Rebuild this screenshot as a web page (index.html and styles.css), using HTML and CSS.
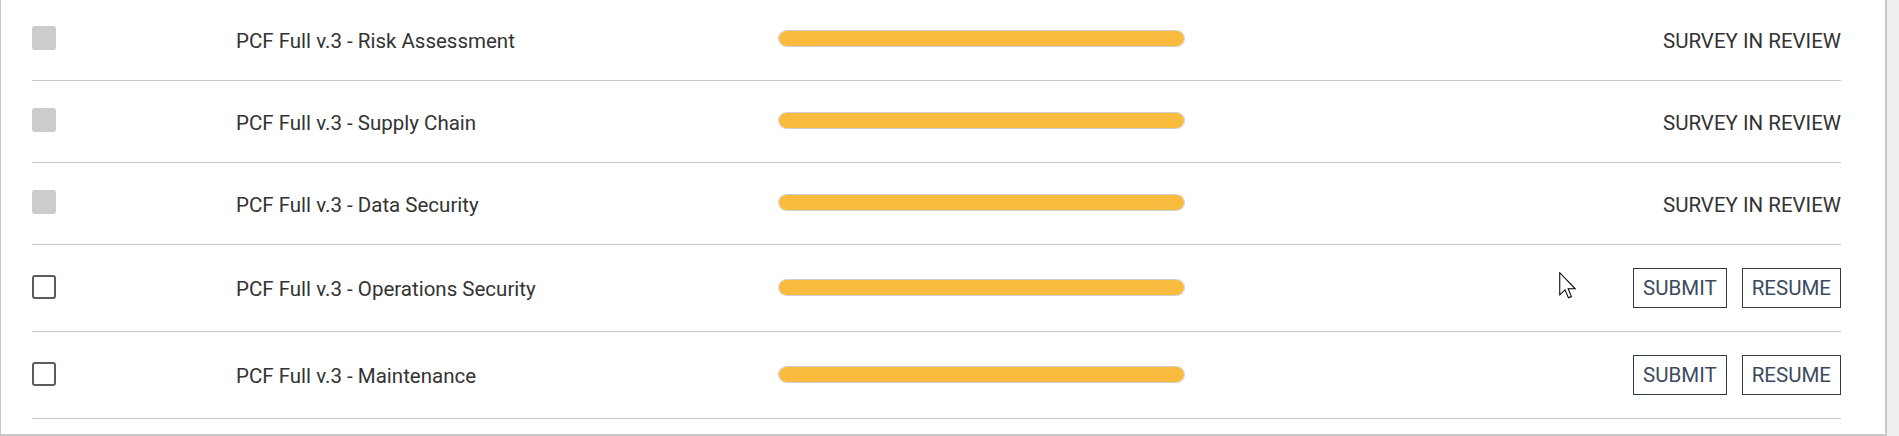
FILE: index.html
```html
<!DOCTYPE html>
<html>
<head>
<meta charset="utf-8">
<title>Surveys</title>
<link rel="stylesheet" href="styles.css">
</head>
<body>
<div class="panel">
  <div class="list">
    <div class="row">
      <span class="check check--disabled"></span>
      <span class="title">PCF Full v.3 - Risk Assessment</span>
      <div class="bar"><div class="bar__fill"></div></div>
      <div class="status">SURVEY IN REVIEW</div>
    </div>
    <div class="row">
      <span class="check check--disabled"></span>
      <span class="title">PCF Full v.3 - Supply Chain</span>
      <div class="bar"><div class="bar__fill"></div></div>
      <div class="status">SURVEY IN REVIEW</div>
    </div>
    <div class="row">
      <span class="check check--disabled"></span>
      <span class="title">PCF Full v.3 - Data Security</span>
      <div class="bar"><div class="bar__fill"></div></div>
      <div class="status">SURVEY IN REVIEW</div>
    </div>
    <div class="row row--actions">
      <span class="check"></span>
      <span class="title">PCF Full v.3 - Operations Security</span>
      <div class="bar"><div class="bar__fill"></div></div>
      <div class="status actions">
        <button class="btn">SUBMIT</button>
        <button class="btn">RESUME</button>
      </div>
    </div>
    <div class="row row--actions">
      <span class="check"></span>
      <span class="title">PCF Full v.3 - Maintenance</span>
      <div class="bar"><div class="bar__fill"></div></div>
      <div class="status actions">
        <button class="btn">SUBMIT</button>
        <button class="btn">RESUME</button>
      </div>
    </div>
  </div>
  <svg class="cursor" width="18" height="27" viewBox="0 0 12 18" aria-hidden="true">
    <path d="M0.5 0.5 L0.5 15.2 L4 11.9 L6.3 17.2 L8.3 16.4 L6.1 11.2 L10.8 11.2 Z" fill="#fff" stroke="#000" stroke-width="0.7" stroke-linejoin="miter"/>
  </svg>
</div>
</body>
</html>
```
FILE: styles.css
```css
html, body {
  margin: 0;
  padding: 0;
}
body {
  background: #efefef;
  font-family: Roboto, "Liberation Sans", Arial, sans-serif;
  color: #333333;
  overflow: hidden;
}
.panel {
  position: relative;
  box-sizing: border-box;
  width: 1887px;
  height: 436px;
  background: #ffffff;
  border-left: 1px solid #c9c9c9;
  border-right: 2px solid #c9c9c9;
  border-bottom: 2px solid #c9c9c9;
  padding: 0 44px 0 31px;
  overflow: hidden;
}
.list {
  margin-top: -1px;
}
.row {
  box-sizing: border-box;
  height: 82px;
  border-bottom: 1px solid #c8c8c8;
  display: grid;
  grid-template-columns: 204px 542px 407px 1fr;
  align-items: center;
}
.row--actions {
  height: 87px;
}
.check {
  box-sizing: border-box;
  width: 24px;
  height: 24px;
  border-radius: 3px;
  border: 2px solid #5f5b5b;
  background: #fff;
  margin-bottom: 3px;
}
.check--disabled {
  border: none;
  background: #cccccc;
}
.title {
  font-size: 20.5px;
  line-height: 24px;
  padding-top: 2px;
  color: #333333;
  white-space: nowrap;
}
.bar {
  box-sizing: border-box;
  height: 17px;
  border: 1px solid #cfcfcf;
  border-radius: 9px;
  background: #eeeeee;
  overflow: hidden;
  margin-bottom: 2px;
}
.bar__fill {
  height: 100%;
  width: 100%;
  background: #f8bb3d;
}
.status {
  justify-self: end;
  font-size: 20.5px;
  line-height: 24px;
  padding-top: 2px;
  color: #333333;
  white-space: nowrap;
}
.actions {
  display: flex;
  gap: 15px;
  padding-top: 0;
}
.btn {
  box-sizing: border-box;
  height: 40px;
  padding: 0 9px;
  border: 1px solid #2f3a4a;
  border-radius: 0;
  background: #ffffff;
  color: #3b4a5e;
  font-family: Roboto, "Liberation Sans", Arial, sans-serif;
  font-size: 20.5px;
  line-height: 38px;
  cursor: pointer;
}
.cursor {
  position: absolute;
  left: 1558px;
  top: 272px;
}
```
